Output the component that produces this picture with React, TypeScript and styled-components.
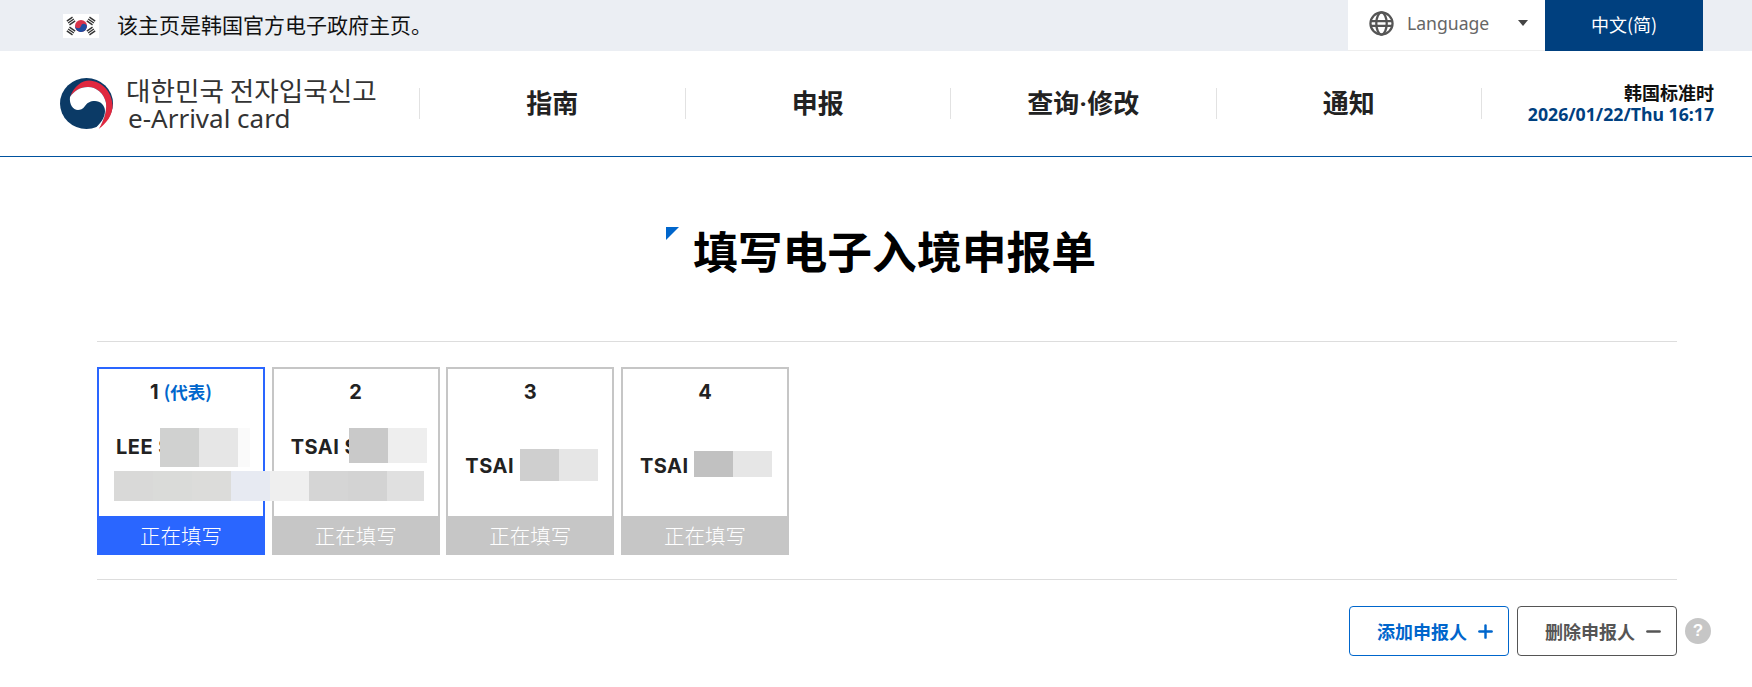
import { Minus, Plus } from 'lucide-react'
import styled, { createGlobalStyle } from 'styled-components'

const GlobalStyle = createGlobalStyle`
  html, body {
    margin: 0;
    padding: 0;
    background: #fff;
    overflow: hidden;
    font-family: "Noto Sans CJK SC", "Noto Sans", sans-serif;
  }
  * {
    box-sizing: border-box;
  }
`

const Page = styled.div`
  width: 1752px;
  height: 687px;
  overflow: hidden;
`

const TopBar = styled.div`
  display: flex;
  align-items: center;
  height: 51px;
  padding: 0 49px 0 63px;
  background: #ebeef3;
`

const Flag = styled.svg`
  width: 36px;
  height: 24px;
  flex: none;
`

const TopBarText = styled.span`
  margin: 0 0 4px 18px;
  flex: 1;
  font-size: 21px;
  color: #111;
  white-space: nowrap;
`

const LanguageBox = styled.div`
  display: flex;
  align-items: center;
  width: 197px;
  height: 51px;
  padding: 0 17px 4px 21px;
  background: #fff;
  border-bottom: 1px solid #eee;
  color: #555;
`

const LanguageLabel = styled.span`
  flex: 1;
  margin-left: 13px;
  font-family: "Noto Sans", sans-serif;
  font-size: 17.6px;
  color: #666;
`

const Caret = styled.span`
  width: 0;
  height: 0;
  border-left: 5px solid transparent;
  border-right: 5px solid transparent;
  border-top: 6px solid #444;
`

const LanguageCurrent = styled.div`
  display: flex;
  align-items: center;
  justify-content: center;
  width: 158px;
  height: 51px;
  padding-bottom: 4px;
  background: #00407f;
  color: #fff;
  font-size: 18px;
`

const Header = styled.header`
  display: flex;
  align-items: center;
  height: 106px;
  border-bottom: 1px solid #00529f;
`

const LogoBlock = styled.div`
  display: flex;
  align-items: center;
  flex: none;
  width: 419px;
  padding-left: 60px;
`

const LogoText = styled.div`
  margin-left: 13px;
  color: #333;
`

const LogoKo = styled.div`
  font-family: "Noto Sans CJK KR", sans-serif;
  font-size: 26.6px;
  line-height: 29px;
  white-space: nowrap;
`

const LogoEn = styled.div`
  margin-left: 2px;
  font-family: "Noto Sans", sans-serif;
  font-size: 26px;
  line-height: 28px;
  white-space: nowrap;
`

const Nav = styled.nav`
  display: flex;
  flex: none;
  width: 1063px;
  height: 31px;
  border-right: 1px solid #e2e2e2;
`

const NavItem = styled.a`
  flex: 1;
  display: flex;
  align-items: center;
  justify-content: center;
  padding-bottom: 4px;
  border-left: 1px solid #e2e2e2;
  font-family: "Roboto", "Noto Sans CJK SC", sans-serif;
  font-size: 26px;
  font-weight: 700;
  color: #222;
`

const Clock = styled.div`
  flex: 1;
  padding: 0 38px 1px 0;
  text-align: right;
  font-weight: 700;
`

const ClockZone = styled.div`
  font-size: 18px;
  line-height: 22px;
  color: #111;
`

const ClockTime = styled.div`
  font-family: "Noto Sans", sans-serif;
  font-size: 17.7px;
  line-height: 22px;
  color: #00407f;
  white-space: nowrap;
`

const Main = styled.main`
  width: 1580px;
  margin-left: 97px;
`

const TitleRow = styled.div`
  display: flex;
  justify-content: center;
  height: 185px;
  padding: 70px 12px 0 0;
  border-bottom: 1px solid #ddd;
`

const TitleMark = styled.span`
  flex: none;
  width: 0;
  height: 0;
  border-top: 13px solid #0066cc;
  border-right: 13px solid transparent;
`

const Title = styled.h1`
  margin: -10px 0 0 14px;
  font-size: 44.8px;
  line-height: 66px;
  font-weight: 700;
  color: #000;
`

const CardRow = styled.div`
  position: relative;
  display: grid;
  grid-template-columns: repeat(4, 168px);
  column-gap: 6.67px;
  padding: 25px 0 24px;
  border-bottom: 1px solid #ddd;
`

const Card = styled.div<{ $active?: boolean }>`
  display: flex;
  flex-direction: column;
  height: 188px;
  border: 2px solid ${props => (props.$active ? '#2a66ff' : '#c6c6c6')};
  border-bottom: 0;
`

const CardNumber = styled.div`
  padding-top: 10px;
  text-align: center;
  font-family: "Inter", "Noto Sans CJK SC", sans-serif;
  font-size: 20px;
  line-height: 26px;
  font-weight: 700;
  color: #222;
`

const CardTag = styled.span`
  margin-left: 5px;
  font-family: "Noto Sans CJK SC", sans-serif;
  font-size: 17.5px;
  color: #0066cc;
`

const CardName = styled.div`
  flex: 1;
  display: flex;
  align-items: center;
  padding: 11px 0 0 17px;
  font-family: "Inter", sans-serif;
  font-size: 20px;
  line-height: 38px;
  letter-spacing: 0.5px;
  font-weight: 700;
  color: #222;
  white-space: pre;
`

const CardStatus = styled.div<{ $active?: boolean }>`
  flex: none;
  height: 39px;
  margin: 0 -2px;
  text-align: center;
  font-size: 20.5px;
  line-height: 38px;
  font-weight: 300;
  color: #fff;
  background: ${props => (props.$active ? '#2a66ff' : '#c6c6c6')};
`

const Mosaic = styled.div<{ $left: number; $top: number; $height: number }>`
  position: absolute;
  left: ${props => props.$left}px;
  top: ${props => props.$top}px;
  display: flex;
  height: ${props => props.$height}px;
`

const MosaicCell = styled.span<{ $color: string; $width?: number }>`
  width: ${props => props.$width ?? 39}px;
  background: ${props => props.$color};
`

const Actions = styled.div`
  display: flex;
  justify-content: flex-end;
  align-items: center;
  gap: 8px;
  margin: 26px -34px 0 0;
`

const ActionButton = styled.button<{ $tone: string }>`
  display: flex;
  align-items: center;
  gap: 8px;
  width: 160px;
  height: 50px;
  padding: 0 0 0 27px;
  background: #fff;
  border: 1px solid ${props => props.$tone};
  border-radius: 4px;
  color: ${props => props.$tone};
  font-family: inherit;
  font-size: 18px;
  font-weight: 700;
`

const HelpDot = styled.span`
  display: flex;
  align-items: center;
  justify-content: center;
  width: 26px;
  height: 26px;
  border-radius: 50%;
  background: #c6c6c6;
  color: #fff;
  font-family: "Liberation Sans", sans-serif;
  font-size: 17px;
  font-weight: 700;
`

const cards = [
  { number: '1', name: 'LEE S\n ', active: true },
  { number: '2', name: 'TSAI S\n ' },
  { number: '3', name: 'TSAI' },
  { number: '4', name: 'TSAI' },
]

// censored name blocks from the screenshot, offsets from the card row
const mosaics = [
  { left: 63, top: 86, height: 39, cells: [['#d0d1d0'], ['#e6e6e6'], ['#fafafa', 12]] },
  { left: 252, top: 86, height: 35, cells: [['#c9c9c9'], ['#eeeeee']] },
  {
    left: 17,
    top: 129,
    height: 30,
    cells: [['#d9d9d8'], ['#dadbd9'], ['#dcdcda'], ['#e7eaf2'], ['#efefef'], ['#d5d5d5'], ['#d3d3d3'], ['#e0e0e0', 37]],
  },
  { left: 423, top: 107, height: 32, cells: [['#cfcfcf'], ['#e6e6e6']] },
  { left: 597, top: 109, height: 26, cells: [['#c1c1c1'], ['#e6e6e6']] },
] as { left: number; top: number; height: number; cells: [string, number?][] }[]

function FlagIcon() {
  const bars = [
    { x: 8, y: 7, r: -35 },
    { x: 28, y: 7, r: 35 },
    { x: 8, y: 17, r: 35 },
    { x: 28, y: 17, r: -35 },
  ]
  return (
    <Flag viewBox="0 0 36 24">
      <rect width="36" height="24" fill="#fff" />
      {bars.map(b => (
        <g key={`${b.x}-${b.y}`} transform={`rotate(${b.r} ${b.x} ${b.y})`} fill="#333">
          <rect x={b.x - 3.5} y={b.y - 3} width="7" height="1.4" />
          <rect x={b.x - 3.5} y={b.y - 0.7} width="7" height="1.4" />
          <rect x={b.x - 3.5} y={b.y + 1.6} width="7" height="1.4" />
        </g>
      ))}
      <circle cx="18" cy="12" r="6" fill="#d8344a" />
      <path d="M12 12a3 3 0 0 0 6 0a3 3 0 0 1 6 0a6 6 0 0 1-12 0z" fill="#1f4ea1" transform="rotate(15 18 12)" />
    </Flag>
  )
}

function GlobeIcon() {
  return (
    <svg width="25" height="25" viewBox="0 0 24 24" fill="none" stroke="#555" strokeWidth="2.2">
      <circle cx="12" cy="12" r="10.6" />
      <ellipse cx="12" cy="12" rx="5" ry="10.6" />
      <path d="M2 9.8h20M2 14.2h20" />
    </svg>
  )
}

function GovLogo() {
  return (
    <svg width="53" height="51" viewBox="0 0 53 51">
      <ellipse cx="26.5" cy="25.5" rx="26.5" ry="25.5" fill="#0b3a66" />
      <path d="M10 19C14 8 22 2.5 29 2.5C42 3 52 14 52.5 27C53 37 46 46 38.5 51C43 44 47 35 46 25C44 15 36 9 28 9C20 9 14 13 10 19Z" fill="#e0283f" />
      <path d="M10 19C14 13 20 9 28 9C36 9 44 15 46 25C47 35 43 44 38.5 51L35 50.5C40 46 45 40 45 33C45 27 40 23 35 23C30 23 27 25 25 28C23 31 20 32 18 32C13 32 9 26 10 19Z" fill="#fff" />
    </svg>
  )
}

export default function App() {
  return (
    <Page>
      <GlobalStyle />
      <TopBar>
        <FlagIcon />
        <TopBarText>该主页是韩国官方电子政府主页。</TopBarText>
        <LanguageBox>
          <GlobeIcon />
          <LanguageLabel>Language</LanguageLabel>
          <Caret />
        </LanguageBox>
        <LanguageCurrent>中文(简)</LanguageCurrent>
      </TopBar>
      <Header>
        <LogoBlock>
          <GovLogo />
          <LogoText>
            <LogoKo>대한민국 전자입국신고</LogoKo>
            <LogoEn>e-Arrival card</LogoEn>
          </LogoText>
        </LogoBlock>
        <Nav>
          <NavItem>指南</NavItem>
          <NavItem>申报</NavItem>
          <NavItem>查询·修改</NavItem>
          <NavItem>通知</NavItem>
        </Nav>
        <Clock>
          <ClockZone>韩国标准时</ClockZone>
          <ClockTime>2026/01/22/Thu 16:17</ClockTime>
        </Clock>
      </Header>
      <Main>
        <TitleRow>
          <TitleMark />
          <Title>填写电子入境申报单</Title>
        </TitleRow>
        <CardRow>
          {cards.map(card => (
            <Card key={card.number} $active={card.active}>
              <CardNumber>
                {card.number}
                {card.active && <CardTag>(代表)</CardTag>}
              </CardNumber>
              <CardName>{card.name}</CardName>
              <CardStatus $active={card.active}>正在填写</CardStatus>
            </Card>
          ))}
          {mosaics.map(m => (
            <Mosaic key={m.left} $left={m.left} $top={m.top} $height={m.height}>
              {m.cells.map(([color, width], i) => (
                <MosaicCell key={i} $color={color} $width={width} />
              ))}
            </Mosaic>
          ))}
        </CardRow>
        <Actions>
          <ActionButton $tone="#0066cc">
            添加申报人
            <Plus size={21} strokeWidth={2.8} />
          </ActionButton>
          <ActionButton $tone="#555555">
            删除申报人
            <Minus size={21} strokeWidth={2.8} />
          </ActionButton>
          <HelpDot>?</HelpDot>
        </Actions>
      </Main>
    </Page>
  )
}
